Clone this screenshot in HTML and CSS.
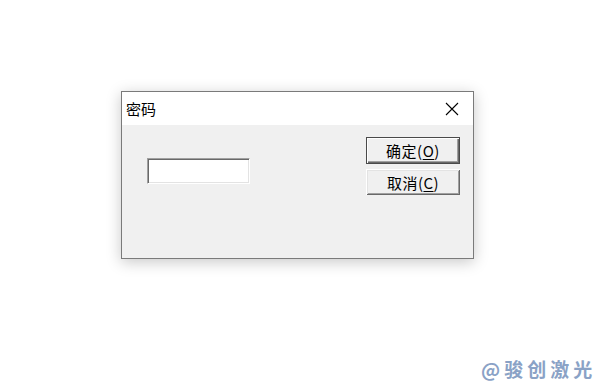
FILE: index.html
```html
<!DOCTYPE html>
<html lang="zh">
<head>
<meta charset="utf-8">
<title>密码</title>
<link rel="stylesheet" href="styles.css">
</head>
<body>
<div class="stage">
  <div class="dialog">
    <div class="titlebar">
      <span class="title">密码</span>
      <span class="close">
        <svg width="14" height="14" viewBox="0 0 14 14"><path d="M1 1 L13 13 M13 1 L1 13" stroke="#000" stroke-width="1.1" fill="none"/></svg>
      </span>
    </div>
    <div class="client">
      <div class="field"></div>
      <div class="buttons">
        <div class="btn default">确定(<u>O</u>)</div>
        <div class="btn">取消(<u>C</u>)</div>
      </div>
    </div>
  </div>
</div>
<div class="watermark">@骏创激光</div>
</body>
</html>
```

FILE: styles.css
```css
html, body {
  margin: 0;
  padding: 0;
  background: #ffffff;
  width: 599px;
  height: 385px;
  overflow: hidden;
  font-family: "Noto Sans CJK SC", "Noto Sans", sans-serif;
}
.stage {
  padding-top: 91px;
  padding-left: 121px;
}
.dialog {
  width: 351px;
  height: 166px;
  border: 1px solid #7a7a7a;
  background: #f0f0f0;
  box-shadow: 0 3px 14px rgba(0, 0, 0, 0.22);
  display: flex;
  flex-direction: column;
}
.titlebar {
  height: 33px;
  background: #ffffff;
  display: flex;
  align-items: center;
  justify-content: space-between;
  padding-left: 4px;
  padding-right: 14px;
}
.title {
  font-size: 15px;
  color: #000;
  line-height: 15px;
  margin-top: -1px;
}
.close {
  display: flex;
  width: 14px;
  height: 14px;
}
.client {
  flex: 1;
  display: flex;
  justify-content: space-between;
  padding: 12px 13px 0 25px;
}
.field {
  width: 101px;
  height: 24px;
  margin-top: 21px;
  background: #ffffff;
  border-top: 1px solid #a0a0a0;
  border-left: 1px solid #a0a0a0;
  border-bottom: 1px solid #ffffff;
  border-right: 1px solid #ffffff;
  box-shadow: inset 1px 1px 0 #696969, inset -1px -1px 0 #e3e3e3;
}
.buttons {
  display: flex;
  flex-direction: column;
  gap: 5px;
  margin-left: -1px;
}
.btn {
  width: 94px;
  height: 26px;
  box-sizing: border-box;
  background: #f0f0f0;
  font-size: 15px;
  letter-spacing: 0.5px;
  color: #000;
  display: flex;
  align-items: center;
  justify-content: center;
  box-shadow: inset 1px 1px 0 #ffffff, inset -1px -1px 0 #696969, inset 2px 2px 0 #e3e3e3, inset -2px -2px 0 #a0a0a0;
}
.btn.default {
  height: 27px;
  border: 1px solid #4a4a4a;
  box-shadow: inset 1px 1px 0 #ffffff, inset -1px -1px 0 #696969, inset -2px -2px 0 #a0a0a0;
}
.btn u {
  text-underline-offset: 2px;
}
.watermark {
  position: absolute;
  left: 481px;
  top: 357px;
  font-size: 19px;
  line-height: 24px;
  font-weight: bold;
  letter-spacing: 4px;
  color: #8aa2c6;
  white-space: nowrap;
}
```
